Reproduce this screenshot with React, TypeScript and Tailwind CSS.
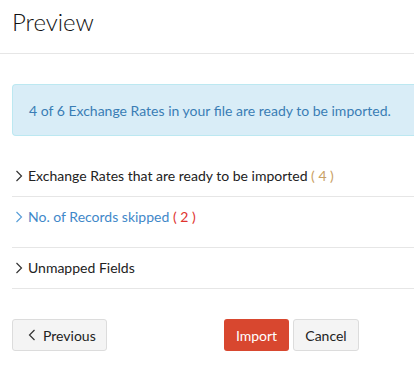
import React from "react";

const Chevron = ({ color = "#333", dir = "right", className = "" }: { color?: string; dir?: "right" | "left"; className?: string }) => (
  <svg width="8" height="12" viewBox="0 0 8 12" className={className} fill="none">
    {dir === "right" ? (
      <polyline points="1.5,1 6.5,6 1.5,11" stroke={color} strokeWidth="1.2" />
    ) : (
      <polyline points="6.5,1 1.5,6 6.5,11" stroke={color} strokeWidth="1.2" />
    )}
  </svg>
);

export default function App() {
  return (
    <div className="w-[414px] h-[372px] overflow-hidden bg-white text-[#222]" style={{ fontFamily: "Lato, 'Open Sans', sans-serif" }}>
      <div className="h-[54px] border-b border-[#e6e6e6] pl-3 flex items-center">
        <h1 className="text-[24px] font-light leading-none text-[#111] -mt-[10px]">Preview</h1>
      </div>
      <div className="pl-3">
        <div className="mt-[30px] h-[52px] bg-[#d9edf7] border-y border-l border-[#bce8f1] flex items-center pl-4 rounded-l-sm">
          <span className="text-[14px] text-[#3a7db5]">4 of 6 Exchange Rates in your file are ready to be imported.</span>
        </div>
        <div className="mt-[20px] border-b border-[#e6e6e6] py-3 flex items-center h-[41px]">
          <Chevron className="ml-[3px] mr-[5px]" />
          <span className="text-[14px] leading-4 text-[#222]">
            Exchange Rates that are ready to be imported <span className="text-[#c9a064]">( 4 )</span>
          </span>
        </div>
        <div className="border-b border-[#e6e6e6] pt-3 pb-[22px] flex items-start h-[51px]">
          <Chevron color="#5a9fd8" className="ml-[3px] mr-[5px] mt-[2px]" />
          <span className="text-[14px] leading-4 text-[#3f88c9]">
            No. of Records skipped <span className="text-[#e0342f]">( 2 )</span>
          </span>
        </div>
        <div className="border-b border-[#e6e6e6] py-3 flex items-center h-[41px]">
          <Chevron className="ml-[3px] mr-[5px]" />
          <span className="text-[14px] leading-4 text-[#222]">Unmapped Fields</span>
        </div>
        <div className="mt-[30px] flex items-center">
          <button className="h-[32px] w-[95px] rounded-[3px] border border-[#dcdcdc] bg-[#f4f4f4] flex items-center pl-[15px] text-[14px] text-[#222]">
            <Chevron dir="left" color="#333" className="mr-[7px]" />
            Previous
          </button>
          <button className="ml-[117px] h-[32px] w-[65px] rounded-[3px] bg-[#d8472f] text-white text-[14px]">Import</button>
          <button className="ml-[4px] h-[32px] w-[66px] rounded-[3px] border border-[#dcdcdc] bg-[#f4f4f4] text-[14px] text-[#222]">Cancel</button>
        </div>
      </div>
    </div>
  );
}
